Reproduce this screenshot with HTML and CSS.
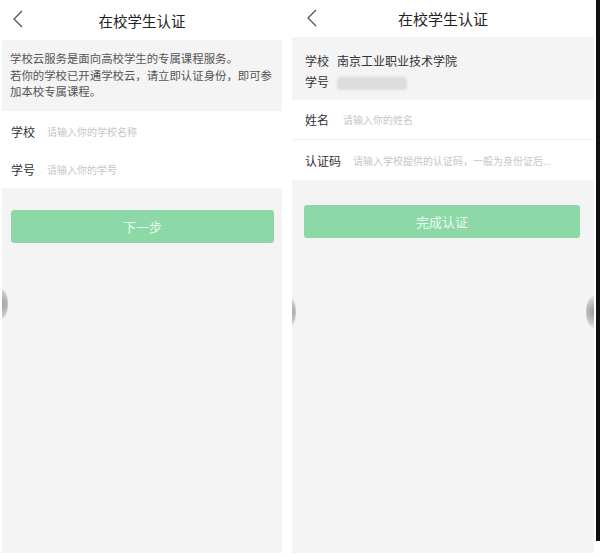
FILE: index.html
```html
<!DOCTYPE html>
<html lang="zh-CN">
<head>
  <meta charset="UTF-8" />
  <meta name="viewport" content="width=device-width, initial-scale=1.0"/>
  <title>在校学生认证</title>
  <link rel="stylesheet" href="styles.css">
</head>
<body>
  <div class="shots">
    <!-- step 1 -->
    <div class="phone phone-left">
      <div class="nav">
        <svg class="back" width="12" height="18" viewBox="0 0 12 18"><polyline points="10,1 2,9 10,17" fill="none" stroke="#555" stroke-width="1.3"/></svg>
        <div class="title">在校学生认证</div>
      </div>
      <div class="intro">
        学校云服务是面向高校学生的专属课程服务。<br>
        若你的学校已开通学校云，请立即认证身份，即可参加本校专属课程。
      </div>
      <div class="form">
        <div class="row"><span class="label">学校</span><span class="hint">请输入你的学校名称</span></div>
        <div class="row"><span class="label">学号</span><span class="hint">请输入你的学号</span></div>
      </div>
      <div class="btn">下一步</div>
      <span class="handle handle-l"></span>
    </div>

    <!-- step 2 -->
    <div class="phone phone-right">
      <div class="nav">
        <svg class="back" width="12" height="18" viewBox="0 0 12 18"><polyline points="10,1 2,9 10,17" fill="none" stroke="#555" stroke-width="1.3"/></svg>
        <div class="title">在校学生认证</div>
      </div>
      <div class="school">
        <div><span class="key">学校</span>南京工业职业技术学院</div>
        <div><span class="key">学号</span><span class="blur"></span></div>
      </div>
      <div class="form">
        <div class="row line"><span class="label">姓名</span><span class="hint">请输入你的姓名</span></div>
        <div class="row"><span class="label">认证码</span><span class="hint">请输入学校提供的认证码，一般为身份证后...</span></div>
      </div>
      <div class="btn">完成认证</div>
      <span class="handle handle-l"></span>
      <span class="handle handle-r"></span>
    </div>
    <div class="edge"></div>
  </div>
</body>
</html>
```

FILE: styles.css
```css
* { box-sizing: border-box; }
body {
  margin: 0;
  background: #fff;
  font-family: "Noto Sans CJK SC", "Noto Sans", sans-serif;
  color: #333;
}
.shots {
  display: flex;
  height: 556px;
}
.phone {
  position: relative;
  background: #f4f4f4;
  height: 553px;
  overflow: hidden;
}
.phone-left {
  width: 280px;
  margin-left: 2px;
}
.phone-right {
  width: 302px;
  margin-left: 10px;
  margin-right: 2px;
}
.edge {
  width: 4px;
  background: #111;
  height: 541px;
}
.nav {
  position: relative;
  background: #fff;
  height: 40px;
  display: flex;
  align-items: center;
  justify-content: center;
}
.phone-right .nav { height: 37px; }
.back {
  position: absolute;
  left: 10px;
  top: 10px;
}
.phone-right .back { left: 14px; top: 9px; }
.title {
  font-size: 14.5px;
  color: #222;
  font-weight: 400;
}
.phone-right .title { font-size: 15px; }
.intro {
  padding: 10px 6px 9px 8px;
  font-size: 11.4px;
  line-height: 16.5px;
  color: #555;
  height: 71px;
}
.form {
  background: #fff;
}
.phone-left .form {
  height: 77px;
  padding-top: 1px;
}
.row {
  display: flex;
  align-items: center;
  height: 38px;
  padding-left: 9px;
}
.label {
  font-size: 12px;
  color: #333;
  width: 36px;
}
.phone-right .row {
  height: 40px;
  padding-left: 13px;
}
.phone-right .row .label { width: 38px; }
.phone-right .row + .row .label { width: 48px; }
.line { border-bottom: 1px solid #f0f0f0; }
.hint {
  font-size: 10px;
  color: #c6c6c6;
  white-space: nowrap;
}
.school {
  padding: 13px 0 0 13px;
  height: 63px;
  font-size: 12px;
  line-height: 21px;
  color: #333;
}
.key { margin-right: 8px; }
.blur {
  display: inline-block;
  vertical-align: middle;
  width: 70px;
  height: 13px;
  background: #dcdcdc;
  border-radius: 4px;
  filter: blur(1px);
}
.btn {
  background: #8cd9a7;
  color: #eafaf0;
  font-size: 13px;
  text-align: center;
  height: 33px;
  line-height: 33px;
  border-radius: 3px;
  margin: 22px 8px 0 9px;
}
.phone-right .btn {
  margin: 25px 14px 0 12px;
}
.handle {
  position: absolute;
  width: 16px;
  height: 32px;
  border-radius: 50%;
  background: radial-gradient(circle, #9a9a9a 0%, #c8c8c8 60%, rgba(230,230,230,0) 100%);
  top: 288px;
}
.handle-l { left: -10px; }
.handle-r { right: -8px; top: 296px; }
.phone-right .handle-l { left: -12px; top: 296px; }
```
